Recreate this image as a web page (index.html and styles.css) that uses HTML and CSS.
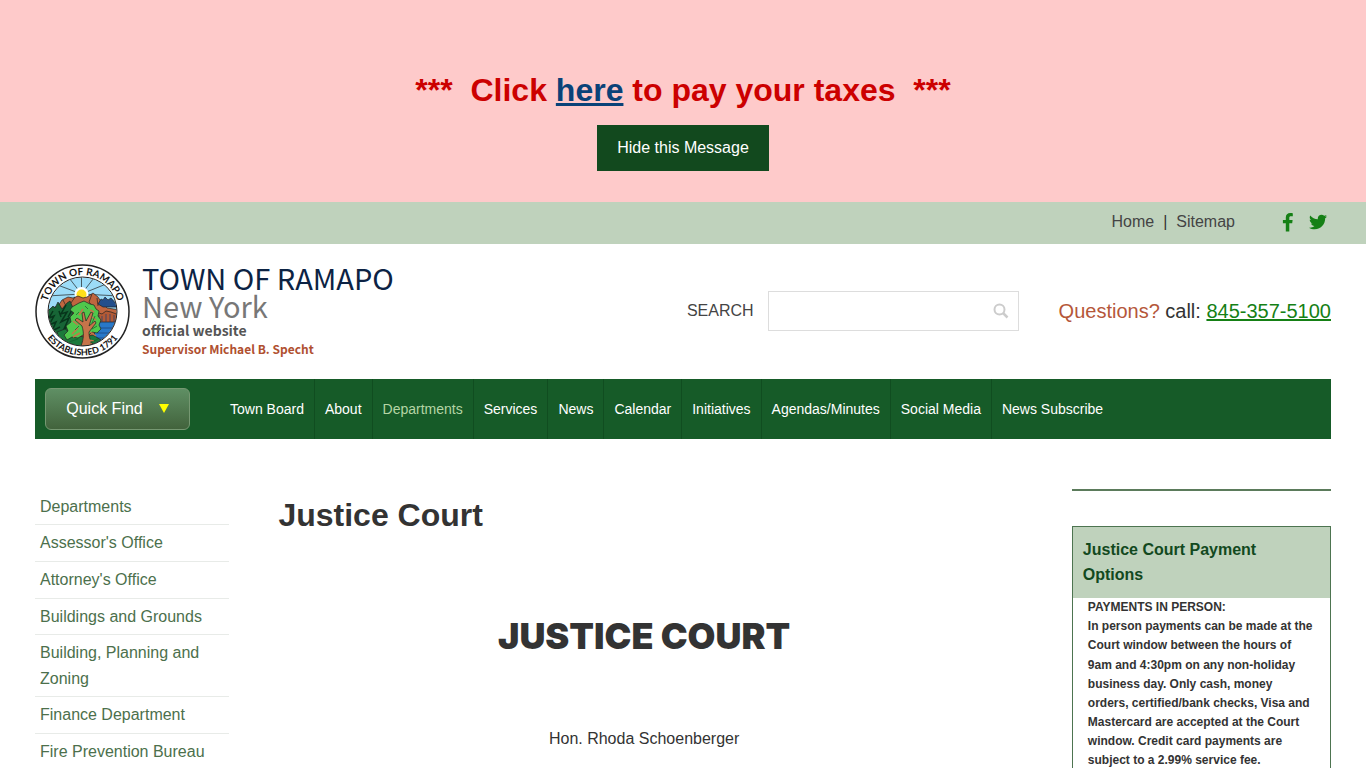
FILE: index.html
```
<!DOCTYPE html>
<html lang="en">
<head>
    <meta charset="UTF-8">
    <meta name="viewport" content="width=device-width, initial-scale=1.0">
    <title>Justice Court - Town of Ramapo</title>
    <link rel="stylesheet" href="styles.css">
</head>
<body>
    <div class="alert" id="alert">
        <p class="alert-text">***&nbsp; Click <a href="#">here</a> to pay your taxes &nbsp;***</p>
        <button type="button" class="alert-close">Hide this Message</button>
    </div>

    <div class="topbar">
        <a href="#">Home</a><span class="divider">|</span><a href="#">Sitemap</a>
        <a href="#" class="social first" aria-label="Facebook">
            <svg width="11" height="20" viewBox="0 0 11 20"><path d="M10.8 1.2v3H9C7.600 4.200 7.300 4.900 7.300 5.900v2.100h3.300l-.4 3.300H7.300V19.500H3.800V11.300H.9V8h2.900V5.500C3.800 2.700 5.600 1 8.200 1c1.200 0 2.300.1 2.600.2z"/></svg>
        </a>
        <a href="#" class="social" aria-label="Twitter">
            <svg width="18" height="16" viewBox="0 0 512 416"><path d="M459 104c.3 4.500.3 9.100.3 13.600C459.300 256.400 353.700 416 160.600 416 101.100 416 45.900 398.800-.5 368.800c8.400 1 16.600 1.300 25.300 1.300 49 0 94.200-16.600 130.300-44.800-46.100-1-84.800-31.200-98.100-72.800 6.500 1 13 1.600 19.800 1.600 9.400 0 18.800-1.300 27.600-3.600-48.100-9.700-84.100-52-84.100-103v-1.300c14 7.800 30.200 12.700 47.400 13.300C39.400 140.700 20.900 108.800 20.900 72.800c0-19.500 5.200-37.400 14.300-53C87 83.200 164.900 124.700 252.300 129.200c-1.600-7.800-2.600-15.900-2.600-24C249.700 47 296.800 0 355.200 0c30.200 0 57.500 12.700 76.700 33.100 23.700-4.500 46.500-13.300 66.600-25.300-7.800 24.400-24.400 44.800-46.100 57.800 21.100-2.300 41.600-8.100 60.400-16.200-14.300 20.800-32.200 39.300-52.600 54.200z"/></svg>
        </a>
    </div>

    <header class="header">
        <a href="#" class="brand">
            <svg class="seal" width="95" height="95" viewBox="0 0 95 95" role="img" aria-label="Town seal">
                <defs>
                    <path id="arcTop" d="M11 47.500a36.500 36.500 0 0 1 73 0"/>
                    <path id="arcBottom" d="M3.500 47.500a44 44 0 0 0 88 0"/>
                    <clipPath id="inner"><circle cx="47.500" cy="47.500" r="34"/></clipPath>
                </defs>
                <circle cx="47.500" cy="47.500" r="46.500" fill="#fff" stroke="#222" stroke-width="1.500"/>
                <g clip-path="url(#inner)" stroke="#222" stroke-width=".7">
                    <path d="M10 10h75v75H10z" fill="#9cdcf8"/>
                    <path d="M46.500 30V10M46.500 30 31 10M46.500 30 20 20M46.500 30 62 10M46.500 30 76 18M46.500 30 12 32M46.500 30 84 32"/>
                    <circle cx="46.500" cy="30" r="7" fill="#fff" stroke="none"/>
                    <circle cx="46.500" cy="30.500" r="5" fill="#ffdf1a" stroke="none"/>
                    <path d="M10 48l7-4 6-2 4-6 6-3 5 1 5-2 5 2 4-1 6-4 5 4 4 6 5 5 13 2v38H10z" fill="#c0663f"/>
                    <path d="M28 36l3 6M40 33l-4 6M57 30l-3 8 5 6M62 34l1 8" fill="none"/>
                    <path d="M63 40l3-5 2 1 2-3 3 3 3-2 8 9H68z" fill="#234f8c"/>
                    <path d="M61 57h24v25H58z" fill="#2878c8"/>
                    <path d="M60 51l4-2 3 1 4-3 5 1 8 3v7H60z" fill="#b35a35"/>
                    <path d="M64 58v-7M67 58v-6M71 58v-8M75 58v-8M79 58v-7M63 64h18M62 69h16M60 74h14" stroke="#173e75"/>
                    <path d="M10 50l8-8 2 2 3-6 4 7 5-6 3-2 4 9-2 5 4 4-2 24-12 7-16-13z" fill="#176536"/>
                    <path d="M18 47l-4 7 5-2-5 9 7-3-4 9 8-4M31 41l-5 9 6-2-6 10 8-4-5 11 7-4M24 47l2 6M37 46l-4 7" fill="none" stroke="#07351b" stroke-width="1.500"/>
                    <path d="M22 68l8-3 7 5 12 3 9-2 8 5-8 10H28z" fill="#1c7a3b"/>
                    <path d="M44 39l5-2 6 3 4 1 2 4 3 2-1 5 3 4-2 5 2 4-4 4-5-1-4 4-5-1-5 3-6-1-5 3-3-5 4-4-2-5 5-4-1-5 4-4-4-3 2-3z" fill="#50c74c"/>
                    <path d="M46 82c3-8 3-13 1-20l-7-6 2-2 6 4-1-9 2-1 2 9 5-9 2 1-4 13 6-5 1 2-7 9c0 5 1 9 5 14z" fill="#c5744a"/>
                    <path d="M38 57l5 4M48 45l-4 6M55 46l4 2M43 64l-6 6M55 68l6 4M38 73l7-4M53 76l6 1M57 53l4 3" fill="none" stroke="#c5744a" stroke-width="1.500"/>
                    <path d="M41 51l3-3M50 42l3 3M60 52l-3 7M62 62l-5 3M40 66l4-4M34 78l9-3M55 79l8-4" fill="none" stroke="#145c2b"/>
                </g>
                <circle cx="47.500" cy="47.500" r="34.500" fill="none" stroke="#222" stroke-width="1"/>
                <text class="seal-text" text-anchor="middle"><textPath href="#arcTop" startOffset="50%">TOWN OF RAMAPO</textPath></text>
                <text class="seal-text small" text-anchor="middle"><textPath href="#arcBottom" startOffset="50%">ESTABLISHED 1791</textPath></text>
            </svg>
            <span class="brand-name">
                <span class="town">TOWN OF RAMAPO</span>
                <span class="state">New York</span>
                <span class="official">official website</span>
                <span class="supervisor">Supervisor Michael B. Specht</span>
            </span>
        </a>
        <form class="search">
            <label for="search">SEARCH</label>
            <div class="search-box">
                <input type="text" id="search">
                <button type="submit" aria-label="Search">
                    <svg width="16" height="16" viewBox="0 0 16 16"><circle cx="6.500" cy="6.500" r="5" fill="none" stroke="#ccc" stroke-width="2"/><path d="M10 10l4.500 4.500" stroke="#ccc" stroke-width="2.500"/></svg>
                </button>
            </div>
        </form>
        <p class="phone"><span>Questions?</span> call: <a href="tel:8453575100">845-357-5100</a></p>
    </header>

    <nav class="nav">
        <button type="button" class="quick-find">Quick Find
            <svg width="10" height="9" viewBox="0 0 10 9"><path d="M0 0h10L5 9z" fill="#ff0"/></svg>
        </button>
        <ul>
            <li><a href="#">Town Board</a></li>
            <li><a href="#">About</a></li>
            <li><a href="#" class="active">Departments</a></li>
            <li><a href="#">Services</a></li>
            <li><a href="#">News</a></li>
            <li><a href="#">Calendar</a></li>
            <li><a href="#">Initiatives</a></li>
            <li><a href="#">Agendas/Minutes</a></li>
            <li><a href="#">Social Media</a></li>
            <li><a href="#">News Subscribe</a></li>
        </ul>
    </nav>

    <div class="columns">
        <ul class="side-menu">
            <li><a href="#">Departments</a></li>
            <li><a href="#">Assessor's Office</a></li>
            <li><a href="#">Attorney's Office</a></li>
            <li><a href="#">Buildings and Grounds</a></li>
            <li><a href="#">Building, Planning and Zoning</a></li>
            <li><a href="#">Finance Department</a></li>
            <li><a href="#">Fire Prevention Bureau</a></li>
        </ul>

        <main class="content">
            <h1>Justice Court</h1>
            <h2>JUSTICE COURT</h2>
            <p>Hon. Rhoda Schoenberger</p>
        </main>

        <aside class="sidebar">
            <section class="box">
                <h3>Justice Court Payment Options</h3>
                <p>PAYMENTS IN PERSON:<br>
                In person payments can be made at the Court window between the hours of 9am and 4:30pm on any non-holiday business day. Only cash, money orders, certified/bank checks, Visa and Mastercard are accepted at the Court window. Credit card payments are subject to a 2.99% service fee.</p>
            </section>
        </aside>
    </div>

    <script>
        document.querySelector('.alert-close').addEventListener('click', function() {
            document.getElementById('alert').style.display = 'none';
        });
    </script>
</body>
</html>
```
FILE: styles.css
```
* {
    box-sizing: border-box;
}
body {
    margin: 0;
    font-family: "Liberation Sans", Arial, sans-serif;
    font-size: 16px;
    line-height: 1.6;
    color: #333;
    background-color: #fff;
}
h1, h2, h3, p, ul {
    margin: 0;
    padding: 0;
}
ul {
    list-style: none;
}
a {
    text-decoration: none;
}
button {
    font: inherit;
    cursor: pointer;
}

/* Alert message */
.alert {
    display: flex;
    flex-direction: column;
    align-items: center;
    padding: 65px 20px 31px;
    background-color: #fecaca;
}
.alert-text {
    margin-bottom: 9px;
    font-size: 32px;
    font-weight: bold;
    color: #c00;
}
.alert-text a {
    color: #0a4278;
    text-decoration: underline;
}
.alert-close {
    padding: 10px 20px;
    border: 0;
    color: #fff;
    background-color: #12491e;
}

/* Top bar */
.topbar {
    display: flex;
    justify-content: flex-end;
    align-items: center;
    height: 42px;
    padding: 0 39px 2px;
    background-color: #bfd2bc;
}
.topbar a {
    color: #444;
}
.divider {
    margin: 0 9px;
}
.topbar .social {
    display: flex;
    margin-left: 16px;
}
.topbar .first {
    margin-left: 47px;
}
.social svg {
    fill: #158015;
}

/* Header */
.header {
    display: flex;
    align-items: center;
    padding: 20px 35px;
}
.brand {
    display: flex;
    gap: 12px;
    margin-right: auto;
}
.seal-text {
    font-family: Lato, sans-serif;
    font-size: 10px;
    font-weight: bold;
    fill: #111;
}
.seal-text.small {
    font-size: 9px;
}
.brand-name {
    display: flex;
    flex-direction: column;
    font-family: "Noto Sans CJK SC", sans-serif;
}
.town {
    font-size: 29px;
    line-height: 27px;
    color: #0c2344;
}
.state {
    font-size: 29px;
    line-height: 29px;
    color: #777;
}
.official {
    font-size: 14px;
    font-weight: bold;
    line-height: 20px;
    color: #555;
}
.supervisor {
    font-size: 12px;
    font-weight: bold;
    line-height: 18px;
    color: #b05030;
}
.search {
    display: flex;
    align-items: center;
    gap: 14px;
    color: #444;
}
.search-box {
    display: flex;
    align-items: center;
    width: 251px;
    height: 40px;
    border: 1px solid #ddd;
}
.search-box input {
    flex: 1;
    min-width: 0;
    height: 38px;
    padding: 0 10px;
    border: 0;
    font: inherit;
    background: none;
}
.search-box button {
    display: flex;
    padding: 0 9px;
    border: 0;
    background: none;
}
.phone {
    margin-left: 40px;
    font-size: 20px;
}
.phone span {
    color: #b5573a;
}
.phone a {
    color: #158015;
    text-decoration: underline;
}

/* Main navigation */
.nav {
    display: flex;
    min-height: 60px;
    margin: 0 35px;
    padding: 0 10px;
    background-color: #165b28;
}
.quick-find {
    display: flex;
    align-items: center;
    justify-content: center;
    gap: 16px;
    width: 145px;
    height: 42px;
    margin: 9px 30px 9px 0;
    border: 1px solid #769872;
    border-radius: 6px;
    color: #fff;
    background: linear-gradient(#5f8f64, #42633c);
}
.nav ul {
    display: flex;
}
.nav li {
    border-right: 1px solid #104d20;
}
.nav li:last-child {
    border-right: 0;
}
.nav li a {
    display: block;
    padding: 0 10px;
    font-size: 14px;
    line-height: 60px;
    color: #fff;
}
.nav li .active {
    color: #b5d5a5;
}

/* Page columns */
.columns {
    display: grid;
    grid-template-columns: 15% 1fr 20%;
    column-gap: 49px;
    padding: 50px 35px;
}
.side-menu li {
    padding: 5px;
    border-bottom: 1px solid #e8ebe8;
}
.side-menu a {
    color: #4c704c;
}
.content {
    padding: 1px 13px 0 0;
    text-align: center;
}
.content h1 {
    margin-bottom: 67px;
    font-size: 32px;
    text-align: left;
}
.content h2 {
    margin-bottom: 60px;
    font-family: "Arial Black", Inter, sans-serif;
    font-size: 36px;
    font-weight: 900;
}
.sidebar {
    border-top: 2px solid #5b7b5b;
}
.box {
    margin-top: 35px;
    border: 1px solid #4d7450;
}
.box h3 {
    padding: 10px;
    font-size: 16px;
    color: #12491e;
    background-color: #bfd2bc;
}
.box p {
    padding: 0 15px 15px;
    font-size: 12px;
    font-weight: bold;
}
```
